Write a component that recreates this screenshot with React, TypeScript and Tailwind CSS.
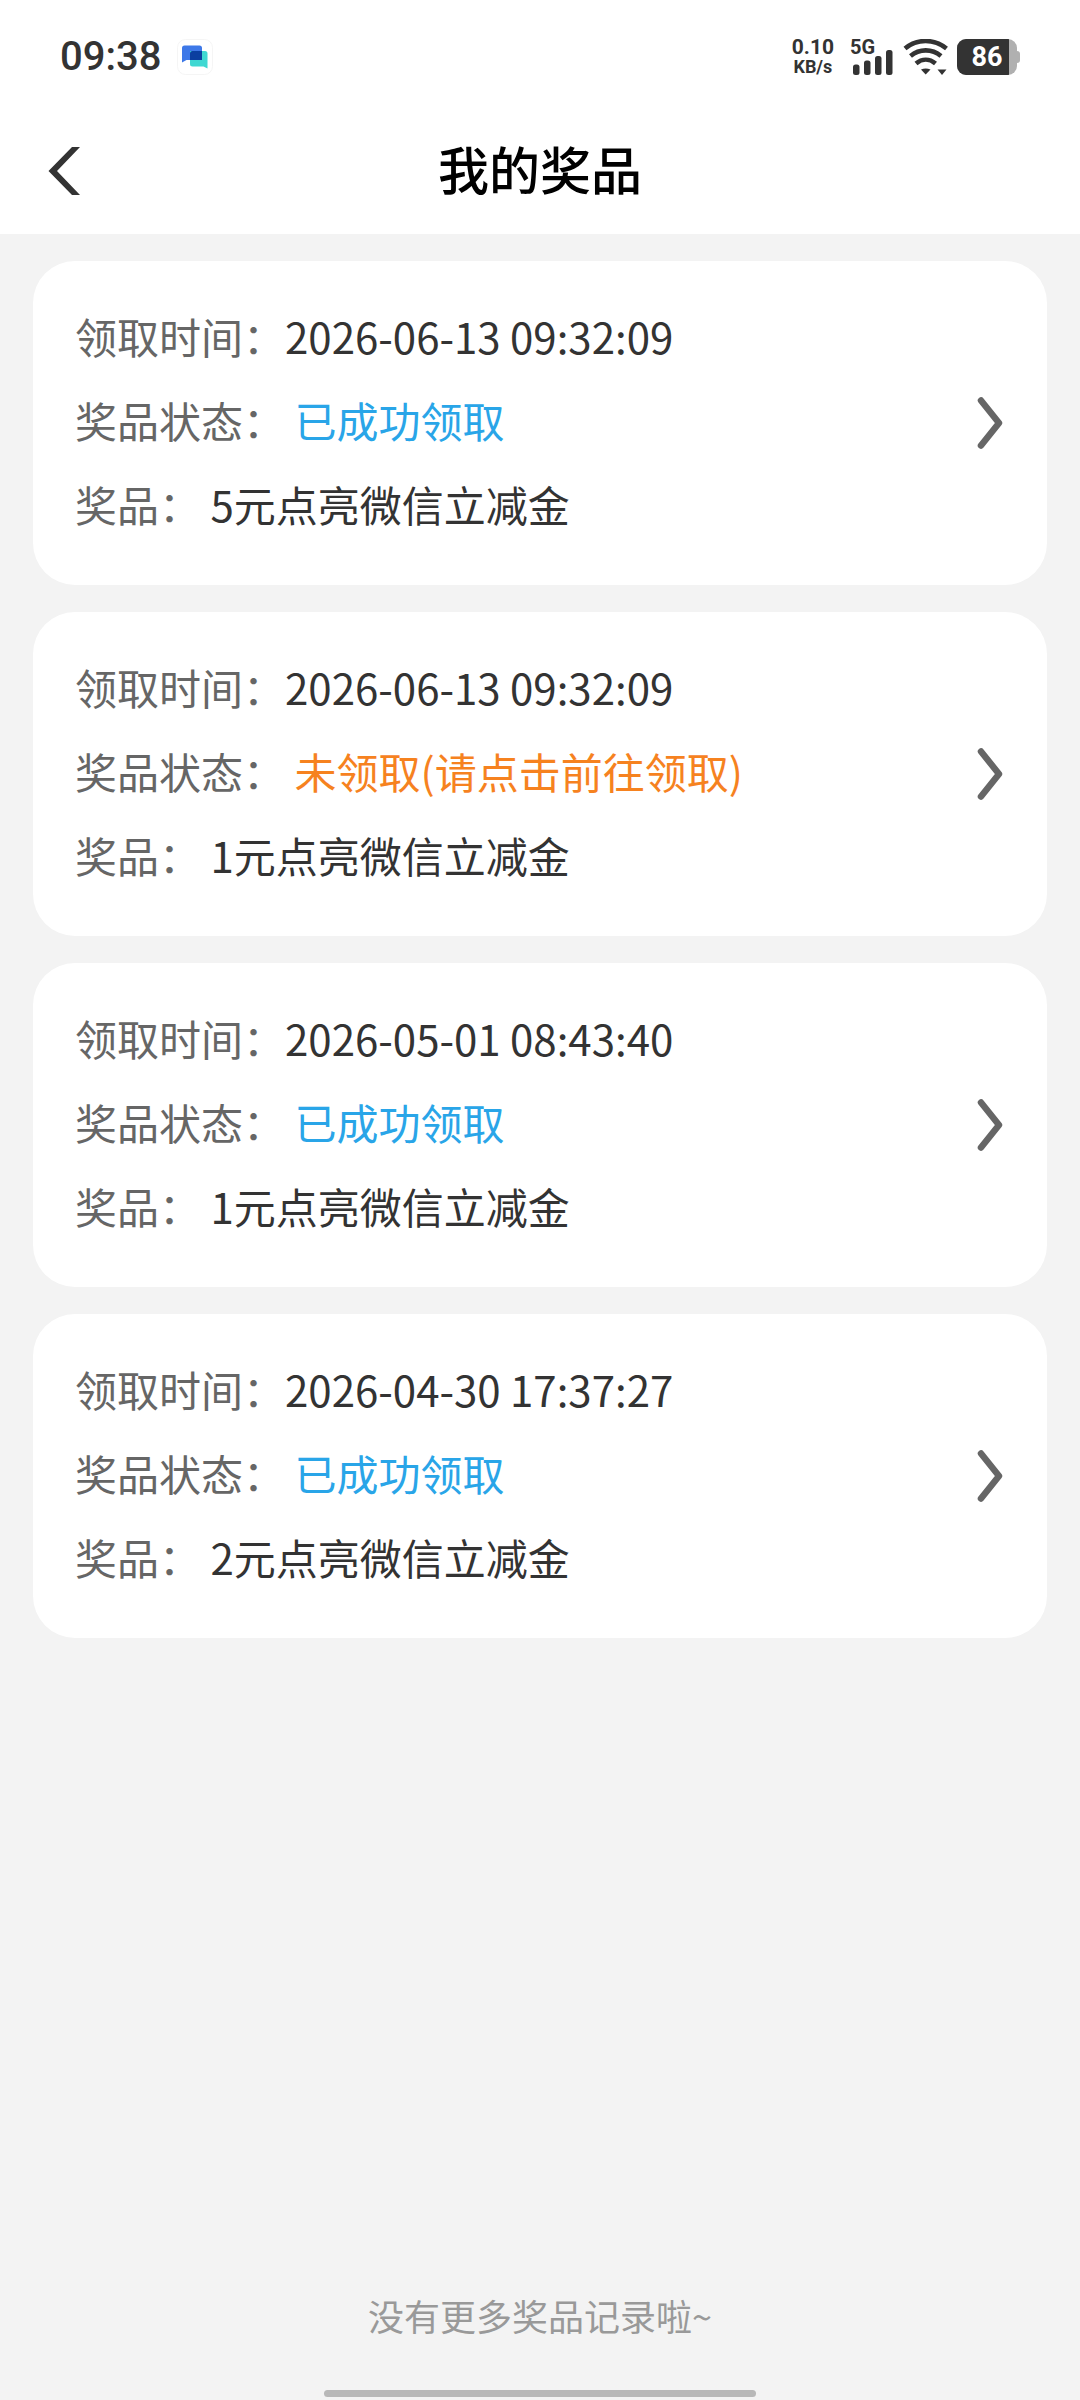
type Prize = {
  id: number;
  time: string;
  claimed: boolean;
  name: string;
};

const PRIZES: Prize[] = [
  { id: 1, time: '2026-06-13 09:32:09', claimed: true, name: '5元点亮微信立减金' },
  { id: 2, time: '2026-06-13 09:32:09', claimed: false, name: '1元点亮微信立减金' },
  { id: 3, time: '2026-05-01 08:43:40', claimed: true, name: '1元点亮微信立减金' },
  { id: 4, time: '2026-04-30 17:37:27', claimed: true, name: '2元点亮微信立减金' },
];

function ChatIcon() {
  return (
    <svg viewBox="0 0 36 36" className="h-9 w-9" aria-hidden="true">
      <rect x="0.5" y="0.5" width="35" height="35" rx="8" fill="#fff" stroke="#f5f5f5" />
      <path d="M5 9a2.500 2.500 0 0 1 2.500-2.500H22.500A2.500 2.500 0 0 1 25 9V21H9.500L5 23.500Z" fill="#3d78e8" />
      <path d="M13 12H28a2.500 2.500 0 0 1 2.500 2.500V29.500L26.500 27.500H15.500A2.500 2.500 0 0 1 13 25Z" fill="#3fd8d2" />
      <path d="M13 14.500A2.500 2.500 0 0 1 15.500 12H25V21H13Z" fill="#0b3fa0" />
    </svg>
  );
}

function SignalIcon() {
  return (
    <svg viewBox="0 0 40 25" className="h-[25px] w-10" fill="#333" aria-hidden="true">
      <rect x="0" y="14.500" width="6.500" height="10.500" rx="2.500" />
      <rect x="11" y="10.500" width="6.500" height="14.500" rx="2.500" />
      <rect x="22" y="6" width="6.500" height="19" rx="2.500" />
      <rect x="33" y="0" width="6.500" height="25" rx="2.500" />
    </svg>
  );
}

function WifiIcon() {
  return (
    <svg viewBox="0 0 46 36" className="h-9 w-[46px]" fill="none" stroke="#333" strokeWidth="4.600" aria-label="Wi-Fi" role="img">
      <path d="M2 9.500C14-0.500 31-0.500 43.500 9.500" />
      <path d="M7.500 17C16.500 9.500 29 9.500 38 17" />
      <path d="M13 24.500C19 19.500 26.500 19.500 32.500 24.500" />
      <path d="M18 30.500Q22.700 28.500 27.500 30.500L22.700 35.500Z" fill="#333" stroke="none" />
      <path d="M34.500 30.500H43.500L39 36Z" fill="#333" stroke="none" />
    </svg>
  );
}

function Battery({ level }: { level: number }) {
  return (
    <div className="flex items-center">
      <div className="relative flex h-9 w-[60px] items-center justify-center overflow-hidden rounded-[9px] bg-[#b0b0b0]">
        <div className="absolute inset-y-0 left-0 bg-[#333]" style={{ width: `${level}%` }} />
        <span className="relative text-[27px] leading-9 font-bold text-white">{level}</span>
      </div>
      <div className="h-3 w-[3px] rounded-r-[3px] bg-[#b0b0b0]" />
    </div>
  );
}

function StatusBar() {
  return (
    <div className="flex h-[108px] items-center justify-between px-[60px] pt-1.5 font-[Roboto,sans-serif] text-[#333]">
      <div className="flex items-center gap-4">
        <span className="text-[40px] leading-10 font-medium">09:38</span>
        <ChatIcon />
      </div>
      <div className="flex items-center">
        <div className="flex flex-col items-center font-bold">
          <span className="text-[21px] leading-5">0.10</span>
          <span className="text-[18px] leading-5">KB/s</span>
        </div>
        <div className="ml-4 flex h-9 flex-col">
          <span className="h-[11px] text-[20px] leading-4 font-bold">5G</span>
          <div className="pl-[3px]">
            <SignalIcon />
          </div>
        </div>
        <div className="ml-2.5">
          <WifiIcon />
        </div>
        <div className="ml-2">
          <Battery level={86} />
        </div>
      </div>
    </div>
  );
}

function TitleBar() {
  return (
    <div className="grid h-[126px] grid-cols-[1fr_auto_1fr] items-center">
      <button type="button" aria-label="返回" className="justify-self-start py-6 pr-6 pl-12">
        <svg viewBox="0 0 33 50" className="h-[50px] w-[33px]" aria-hidden="true">
          <path d="M24 1H32L9 25L32 49H24L0.500 25Z" fill="#333" />
        </svg>
      </button>
      <h1 className="pb-1.5 text-[51px] leading-[60px] font-medium text-black">我的奖品</h1>
    </div>
  );
}

function PrizeCard({ prize }: { prize: Prize }) {
  return (
    <button
      type="button"
      className="flex w-full items-center justify-between rounded-[42px] bg-white pt-[33px] pr-[43px] pb-[39px] pl-[42px] text-left text-[42px] leading-[84px] text-[#333]"
    >
      <span className="flex flex-col">
        <span>
          <span className="text-[#666]">领取时间：</span>
          {prize.time}
        </span>
        <span>
          <span className="text-[#666]">奖品状态：</span>{' '}
          {prize.claimed ? (
            <span className="text-[#29a5e8]">已成功领取</span>
          ) : (
            <span className="text-[#f6821f]">未领取(请点击前往领取)</span>
          )}
        </span>
        <span>
          <span className="text-[#666]">奖品：</span> {prize.name}
        </span>
      </span>
      <svg
        viewBox="0 0 30 54"
        className="mt-1.5 h-[54px] w-[30px]"
        fill="none"
        stroke="#666"
        strokeWidth="6.500"
        strokeLinecap="round"
        strokeLinejoin="round"
        aria-hidden="true"
      >
        <path d="M7 4.500L25 27L7 49.500" />
      </svg>
    </button>
  );
}

export default function App() {
  return (
    <div className="flex min-h-screen flex-col bg-[#f3f3f3] font-['Noto_Sans_CJK_SC',sans-serif]">
      <header className="bg-white">
        <StatusBar />
        <TitleBar />
      </header>
      <main className="flex flex-1 flex-col px-[33px] pt-[27px]">
        <ul className="flex flex-col gap-[27px]">
          {PRIZES.map((prize) => (
            <li key={prize.id}>
              <PrizeCard prize={prize} />
            </li>
          ))}
        </ul>
        <p className="mt-auto text-center text-[36px] leading-[54px] text-[#999]">没有更多奖品记录啦~</p>
      </main>
      <footer className="flex justify-center pt-12 pb-[3px]">
        <div className="h-[7px] w-2/5 rounded-full bg-[#b8b8b8]" />
      </footer>
    </div>
  );
}
